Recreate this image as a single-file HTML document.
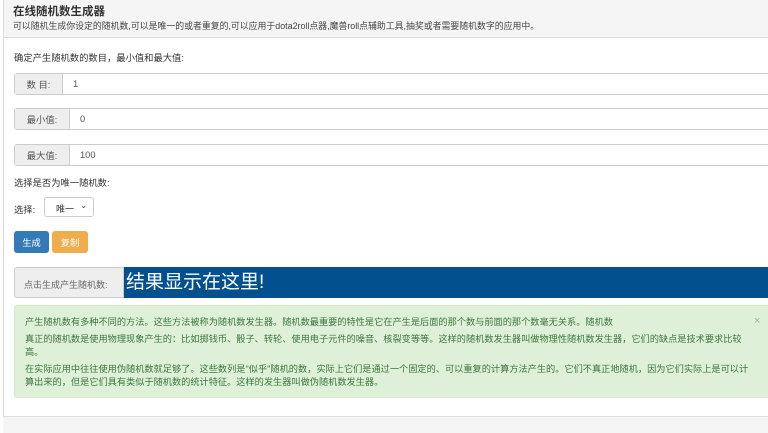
<!DOCTYPE html><html><head><meta charset="utf-8"><style>
body{margin:0;width:768px;height:432px;overflow:hidden;background:#fff;font-family:"Liberation Sans","Noto Sans CJK SC",sans-serif;color:#333;position:relative}
.a{position:absolute}
.hd{left:3px;top:0;width:770px;height:37px;background:#f5f5f5;border-left:1px solid #ddd;border-bottom:1px solid #ddd}
.side{left:3px;top:37px;width:1px;height:380px;background:#ddd}
.t{font-size:11.5px;font-weight:bold;left:13px;top:3px;color:#333}
.st{font-size:8.9px;left:13px;top:19px;color:#444;white-space:nowrap}
.f{font-size:9.3px}
.ig{left:14px;width:760px;height:22px;border:1px solid #ccc;border-radius:3px 0 0 3px;display:flex;font-size:9.3px;box-sizing:border-box}
.ig .ad{background:#eee;border-right:1px solid #ccc;display:flex;align-items:center;justify-content:center;color:#555;font-size:9.3px}
.ig .v{padding-left:10px;display:flex;align-items:center;color:#555}
.btn{top:231px;height:22px;border-radius:3px;color:#fff;font-size:9.3px;display:flex;align-items:center;justify-content:center}
</style></head><body>
<div class="a hd"></div><div class="a side"></div>
<div class="a t">在线随机数生成器</div>
<div class="a st">可以随机生成你设定的随机数,可以是唯一的或者重复的,可以应用于dota2roll点器,魔兽roll点辅助工具,抽奖或者需要随机数字的应用中。</div>
<div class="a f" style="left:14px;top:50px">确定产生随机数的数目，最小值和最大值:</div>
<div class="a ig" style="top:73px"><div class="ad" style="width:47px">数 目:</div><div class="v">1</div></div>
<div class="a ig" style="top:108px"><div class="ad" style="width:54px">最小值:</div><div class="v">0</div></div>
<div class="a ig" style="top:144px"><div class="ad" style="width:54px">最大值:</div><div class="v">100</div></div>
<div class="a f" style="left:14px;top:175px">选择是否为唯一随机数:</div>
<div class="a f" style="left:14px;top:202px">选择:</div>
<div class="a" style="left:44px;top:197px;width:50px;height:20px;border:1px solid #ccc;border-radius:3px;font-size:9px;box-sizing:border-box;padding:4px 0 0 11px">唯一 <span style="position:absolute;right:6px;top:3px;font-size:8px">&#8964;</span></div>
<div class="a btn" style="left:14px;width:35px;background:#337ab7">生成</div>
<div class="a btn" style="left:52px;width:36px;background:#f0ad4e">复制</div>
<div class="a" style="left:14px;top:267px;width:110px;height:31px;background:#eee;border:1px solid #ccc;border-radius:3px 0 0 3px;box-sizing:border-box;font-size:9px;color:#666;padding:10px 0 0 9px">点击生成产生随机数:</div>
<div class="a" style="left:124px;top:267px;width:650px;height:31px;background:#03508f;color:#fff;font-size:19px;line-height:31px;padding-left:2px">结果显示在这里!</div>
<div class="a" style="left:14px;top:305px;width:760px;height:93px;background:#dff0d8;border:1px solid #d6e9c6;border-radius:3px;box-sizing:border-box;color:#3c763d;font-size:9.2px;line-height:13px;padding:10px 0 0 10px">
<div style="width:730px">产生随机数有多种不同的方法。这些方法被称为随机数发生器。随机数最重要的特性是它在产生是后面的那个数与前面的那个数毫无关系。随机数</div>
<div style="width:730px;margin-top:4px">真正的随机数是使用物理现象产生的：比如掷钱币、骰子、转轮、使用电子元件的噪音、核裂变等等。这样的随机数发生器叫做物理性随机数发生器，它们的缺点是技术要求比较高。</div>
<div style="width:731px;margin-top:4px">在实际应用中往往使用伪随机数就足够了。这些数列是"似乎"随机的数，实际上它们是通过一个固定的、可以重复的计算方法产生的。它们不真正地随机，因为它们实际上是可以计算出来的，但是它们具有类似于随机数的统计特征。这样的发生器叫做伪随机数发生器。</div>
<div class="a" style="left:739px;top:9px;color:#aaa;font-size:11px">×</div></div>
<div class="a" style="left:3px;top:416px;width:770px;height:16px;background:#f5f5f5;border-top:1px solid #ddd"></div>
</body></html>
